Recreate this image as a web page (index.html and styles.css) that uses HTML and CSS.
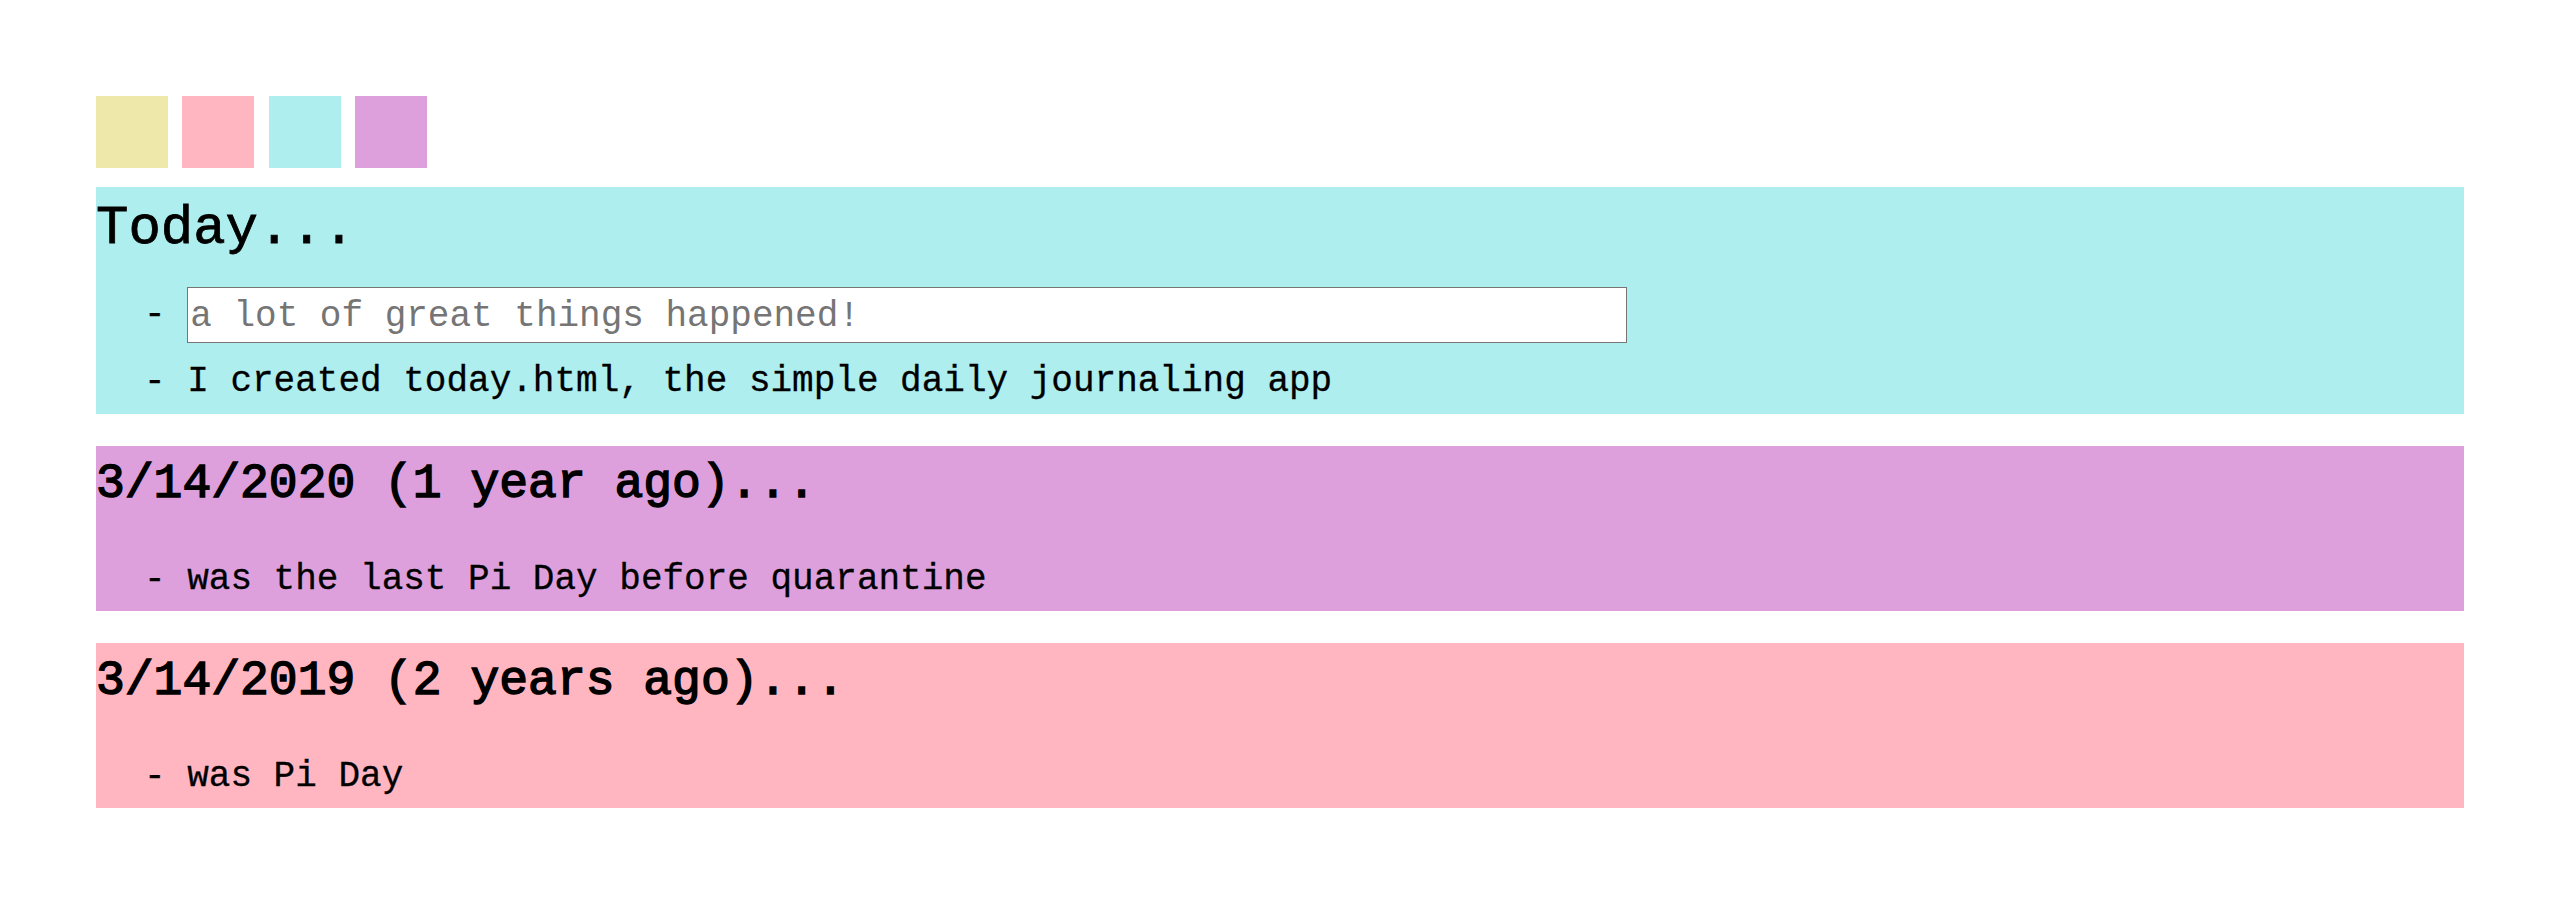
FILE: index.html
```html
<!DOCTYPE html>
<html lang="en">
<head>
<meta charset="utf-8">
<title>today.html</title>
<link rel="stylesheet" href="styles.css">
</head>
<body>
  <div class="swatches">
    <div class="swatch swatch-gold"></div>
    <div class="swatch swatch-pink"></div>
    <div class="swatch swatch-cyan"></div>
    <div class="swatch swatch-plum"></div>
  </div>

  <section class="day day-cyan day-today">
    <h1 class="day-title title-today">Today...</h1>
    <div class="entry entry-input">
      <span class="dash">-&nbsp;</span><input class="entry-field" type="text" placeholder="a lot of great things happened!">
    </div>
    <div class="entry entry-after-input">- I created today.html, the simple daily journaling app</div>
  </section>

  <section class="day day-plum">
    <h2 class="day-title">3/14/2020 (1 year ago)...</h2>
    <div class="entry entry-past">- was the last Pi Day before quarantine</div>
  </section>

  <section class="day day-pink">
    <h2 class="day-title">3/14/2019 (2 years ago)...</h2>
    <div class="entry entry-past">- was Pi Day</div>
  </section>
</body>
</html>
```

FILE: styles.css
```css
html, body {
  margin: 0;
  background: #ffffff;
}

body {
  padding: 96px 96px 0 96px;
  font-family: "Liberation Mono", "DejaVu Sans Mono", monospace;
  color: #000000;
}

.swatches {
  display: flex;
  gap: 14.33px;
  margin-bottom: 19px;
}

.swatch {
  width: 72px;
  height: 72px;
}

.swatch-gold { background: #eee8aa; }
.swatch-pink { background: #ffb6c1; }
.swatch-cyan { background: #afeeee; }
.swatch-plum { background: #dda0dd; }

.day {
  padding: 0 0 7px 0;
  margin-bottom: 32px;
}

.day-cyan { background: #afeeee; padding-bottom: 8px; }
.day-plum { background: #dda0dd; }
.day-pink { background: #ffb6c1; }

.day-title {
  margin: 0;
  font-weight: normal;
  font-size: 48px;
  line-height: 76px;
  white-space: pre;
  -webkit-text-stroke: 1.5px #000000;
}

.title-today {
  font-size: 54px;
  line-height: 84px;
  -webkit-text-stroke: 0.8px #000000;
}

.entry {
  font-size: 36px;
  line-height: 48px;
  padding-left: 48px;
  white-space: pre;
  -webkit-text-stroke: 0.3px #000000;
}

.entry-input {
  display: flex;
  align-items: center;
  margin-top: 16px;
}

.entry-after-input {
  margin-top: 15px;
}

.entry-past {
  margin-top: 34px;
}

.entry-field {
  box-sizing: border-box;
  width: 1440px;
  height: 56px;
  margin: 0;
  padding: 3px 2px 0 2px;
  border: 1px solid #767676;
  border-radius: 0;
  background: #ffffff;
  font-family: "Liberation Mono", "DejaVu Sans Mono", monospace;
  font-size: 36px;
  color: #000000;
  outline: none;
  -webkit-text-stroke: 0;
}

.entry-field::placeholder {
  color: #757575;
  opacity: 1;
}
```
